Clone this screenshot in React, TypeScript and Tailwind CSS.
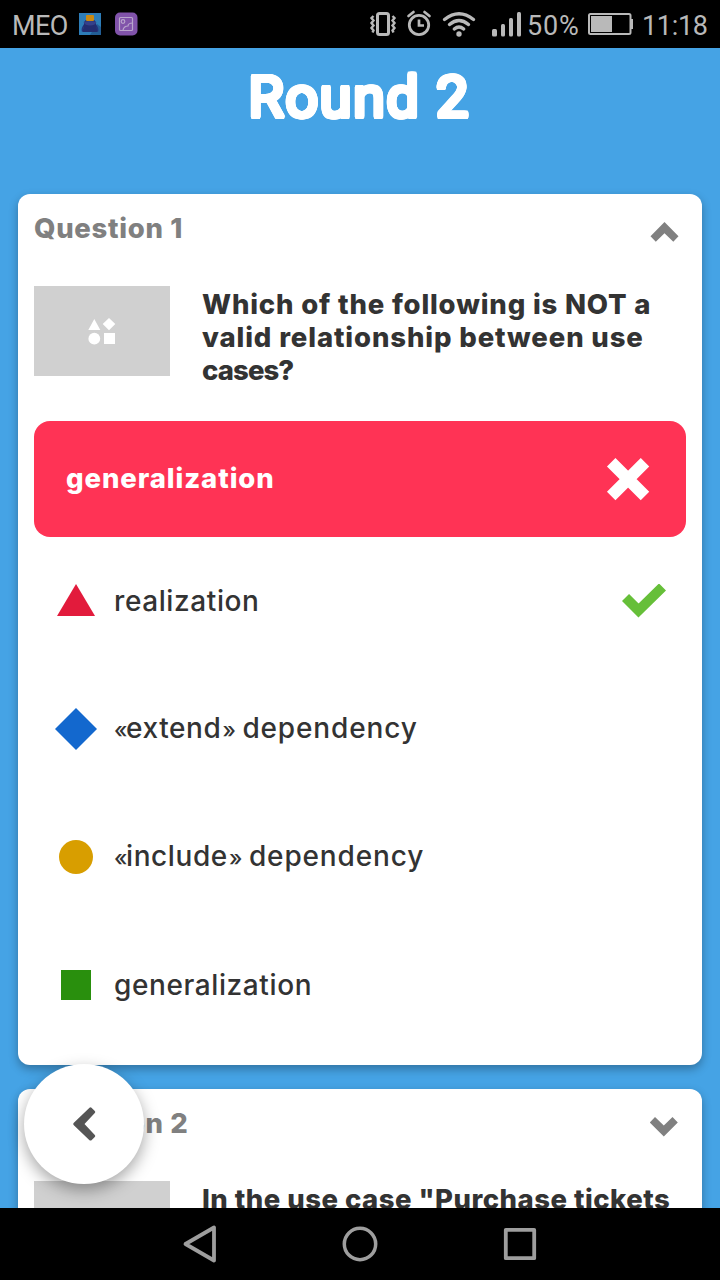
import type { ReactNode } from "react";

function StatusBar() {
  return (
    <header className="flex h-12 shrink-0 items-center bg-black pl-3 font-['Roboto',sans-serif] text-[27px] leading-none text-[#b9b9b9]">
      <span className="mt-[4px] w-[67px] shrink-0 tracking-[-0.6px]">MEO</span>
      <svg className="h-12 w-[60px] shrink-0" viewBox="79 0 60 48">
        <rect x="79" y="13" width="22" height="22" fill="#2d7db8" />
        <path d="M90 35h11V27l-4-3z" fill="#225e96" />
        <path d="M84.500 25q-3 3-2 6.500M95.500 25q3 3 2 6.500" fill="none" stroke="#24337f" strokeWidth="1.300" />
        <path d="M84 24q0-5 6-5t6 5l1.500 8h-15z" fill="#232d70" />
        <rect x="86" y="15" width="8" height="6" rx="1" fill="#c98912" />
        <path d="M83.500 22q6.500-2 13 0-1.500 3.500-6.500 3.500T83.500 22z" fill="#35418a" />
        <rect x="115" y="12.500" width="22.500" height="23" rx="5" fill="#8153aa" />
        <rect x="119.500" y="17.500" width="13" height="13" rx="1" fill="none" stroke="#b9a5cc" strokeWidth="1.200" />
        <circle cx="123" cy="21.500" r="1.800" fill="none" stroke="#b9a5cc" strokeWidth="1.200" />
        <path d="M123 30q1-4 5-4 0-3 5-3" fill="none" stroke="#b9a5cc" strokeWidth="1.200" />
      </svg>
      <svg className="ml-[227px] h-12 w-40 shrink-0" viewBox="366 0 160 48" fill="none" stroke="#b9b9b9">
        <rect x="377.500" y="13.500" width="11" height="21" rx="2" strokeWidth="3" />
        <path d="m373.500 16-2 2 2 2.500-2 2.500 2 2.500-2 2.500 2 2.500-1 2M392.500 16l2 2-2 2.500 2 2.500-2 2.500 2 2.500-2 2.500 1 2" strokeWidth="2.400" />
        <circle cx="419" cy="25" r="9.700" strokeWidth="2.800" />
        <path d="M419 19.500v6h5" strokeWidth="2.700" />
        <path d="m408.500 16 5-4M424.500 12l5 4" strokeWidth="2.700" strokeLinecap="round" />
        <path d="M444.500 19.500q14.500-11.500 29 0M449.500 24.500q9.500-8 19 0M454.300 29q4.700-4 9.400 0" strokeWidth="3.400" strokeLinecap="round" />
        <circle cx="459" cy="34" r="2.700" fill="#b9b9b9" stroke="none" />
        <g fill="#b9b9b9" stroke="none">
          <rect x="492" y="29" width="5" height="7.500" rx="1.500" />
          <rect x="501" y="24" width="4" height="12.500" rx="1.500" />
          <rect x="509" y="18" width="4" height="18.500" rx="1.500" />
          <rect x="517" y="12" width="4" height="24.500" rx="1.500" />
        </g>
      </svg>
      <span className="mt-[4px] ml-px w-[59px] shrink-0 tracking-[0.800px]">50%</span>
      <svg className="h-12 w-12 shrink-0" viewBox="586 0 48 48">
        <rect x="589" y="14" width="41.500" height="20" rx="1.500" fill="none" stroke="#b9b9b9" strokeWidth="2" />
        <rect x="591" y="16" width="21" height="16" fill="#b9b9b9" />
        <rect x="631" y="19" width="2" height="10" fill="#b9b9b9" />
      </svg>
      <span className="mt-[4px] ml-[8px] tracking-[-0.300px]">11:18</span>
    </header>
  );
}

function Thumbnail() {
  return (
    <div className="flex h-[90px] w-[136px] shrink-0 items-center justify-center bg-[#d0d0d0]">
      <svg width="28" height="27" viewBox="88 318 28 27" fill="#fff">
        <path d="m94.300 319 6 11h-12zM109 318l6.300 6-6.300 6.300-6.300-6.300z" />
        <circle cx="94.300" cy="338.700" r="5.900" />
        <path d="M104 333h11v11h-11z" />
      </svg>
    </div>
  );
}

function Card({ title, open, className, children }: { title: ReactNode; open: boolean; className: string; children: ReactNode }) {
  return (
    <section className={`mx-[18px] shrink-0 rounded-xl bg-white px-4 shadow-[0_4px_10px_rgba(0,0,0,0.3)] ${className}`}>
      <div className="flex h-[92px] justify-between">
        <h2 className="mt-[18px] text-[27.500px] leading-8 font-extrabold tracking-[0.700px] whitespace-nowrap text-[#808080]">{title}</h2>
        <svg className="mt-7 mr-[7px]" width="29" height="20" viewBox="0 0 29 20" fill="#808080">
          {open ? (
            <path d="m14.500 0 14 14.200-5.200 5.500-8.800-8.500-8.700 8.500L.5 14.200z" />
          ) : (
            <path d="M14.500 19.500.5 5.500 5.700 0l8.800 8.500L23.200 0l5.300 5.500z" transform="translate(-.7)" />
          )}
        </svg>
      </div>
      {children}
    </section>
  );
}

function Stereotype({ name }: { name: string }) {
  return (
    <span className="flex items-baseline">
      <span className="w-[12px] text-[22px] tracking-normal">«</span>
      <span>{name}</span>
      <span className="ml-[1px] w-[13px] text-[22px] tracking-normal">»</span>
      <span className="ml-[7px] tracking-[0.850px]">dependency</span>
    </span>
  );
}

const answers = [
  { id: "a", label: "realization", correct: true, shape: <path d="m21 4 19 32H2z" fill="#e21b3c" /> },
  { id: "b", label: <Stereotype name="extend" />, correct: false, shape: <path d="m21 0 21 21-21 21L0 21z" fill="#1368ce" /> },
  { id: "c", label: <Stereotype name="include" />, correct: false, shape: <circle cx="21" cy="21" r="17" fill="#d89e00" /> },
  { id: "d", label: "generalization", correct: false, shape: <path d="M6 6h30v30H6z" fill="#298f0d" /> },
];

export default function App() {
  return (
    <div className="relative flex h-[1280px] w-[720px] flex-col overflow-hidden bg-[#45a3e5] font-['Inter',sans-serif] text-[#333]">
      <StatusBar />
      <main className="flex min-h-0 flex-1 flex-col overflow-hidden">
        <h1 className="h-[146px] shrink-0 pt-[16px] pr-[2px] text-center font-['Roboto',sans-serif] text-[58px] leading-[66px] font-normal tracking-[1.300px] text-white [text-shadow:2.200px_0_#fff,-2.200px_0_#fff,0_2.200px_#fff,0_-2.200px_#fff,1.600px_1.600px_#fff,-1.600px_1.600px_#fff,1.600px_-1.600px_#fff,-1.600px_-1.600px_#fff,2px_0.900px_#fff,2px_-0.900px_#fff,-2px_0.900px_#fff,-2px_-0.900px_#fff,0.900px_2px_#fff,0.900px_-2px_#fff,-0.900px_2px_#fff,-0.900px_-2px_#fff]">
          Round 2
        </h1>
        <Card title="Question 1" open className="h-[871px]">
          <div className="flex h-[135px] gap-8">
            <Thumbnail />
            <p className="mt-0.5 text-[27.500px] leading-[33px] font-extrabold whitespace-nowrap">
              <span className="block tracking-[0.830px]">Which of the following is NOT a</span>
              <span className="block tracking-[0.880px]">valid relationship between use</span>
              <span className="block tracking-[-0.900px]">cases?</span>
            </p>
          </div>
          <div className="flex h-[116px] items-center justify-between rounded-2xl bg-[#ff3355] pr-9 pl-8 text-white">
            <span className="-mt-0.5 text-[27.500px] leading-8 font-extrabold tracking-[0.920px]">generalization</span>
            <svg width="44" height="44" viewBox="0 0 44 44">
              <path d="m5.200 5.200 33.800 33.800M39 5.200 5.200 39" stroke="#fff" strokeWidth="12" />
            </svg>
          </div>
          <ul>
            {answers.map((answer) => (
              <li key={answer.id} className="flex h-32 items-center pr-5 pl-[21px]">
                <svg className="shrink-0" width="42" height="42" viewBox="0 0 42 42">{answer.shape}</svg>
                <span className="ml-[17px] flex-1 text-[28px] leading-8 font-medium tracking-[0.600px] whitespace-nowrap">{answer.label}</span>
                {answer.correct && (
                  <svg width="44" height="34" viewBox="0 0 44 34">
                    <path d="m3.500 13.500 13 13L40.500 3" fill="none" stroke="#66bf39" strokeWidth="10" />
                  </svg>
                )}
              </li>
            ))}
          </ul>
        </Card>
        <Card title="Question 2" open={false} className="mt-6 h-[400px]">
          <div className="flex gap-8">
            <Thumbnail />
            <p className="mt-0.5 text-[27.500px] leading-[33px] font-extrabold tracking-[0.480px] whitespace-nowrap">In the use case "Purchase tickets</p>
          </div>
        </Card>
      </main>
      <nav className="flex h-[72px] shrink-0 items-center justify-center bg-black">
        <svg width="360" height="48" viewBox="180 1220 360 48" fill="none" stroke="#9e9e9e" strokeLinejoin="round">
          <path d="M214 1227.500v33l-28.500-16.500z" strokeWidth="3.800" />
          <circle cx="360" cy="1244" r="15.700" strokeWidth="3.500" />
          <rect x="505.800" y="1229.800" width="28.400" height="28.400" strokeWidth="3.800" />
        </svg>
      </nav>
      <button aria-label="Back" className="absolute top-[1064px] left-6 flex size-[120px] items-center justify-center rounded-full bg-white shadow-[0_6px_16px_rgba(0,0,0,0.35)]">
        <svg width="24" height="36" viewBox="0 0 24 36">
          <path d="M17.500 1.700q1-.8 2 0l3.300 3.200q1 1 0 2L12.500 18l10.300 11q1 1 0 2l-3.300 3.200q-1 .8-2 0L1.600 19q-.8-1 0-2z" fill="#555" />
        </svg>
      </button>
    </div>
  );
}
